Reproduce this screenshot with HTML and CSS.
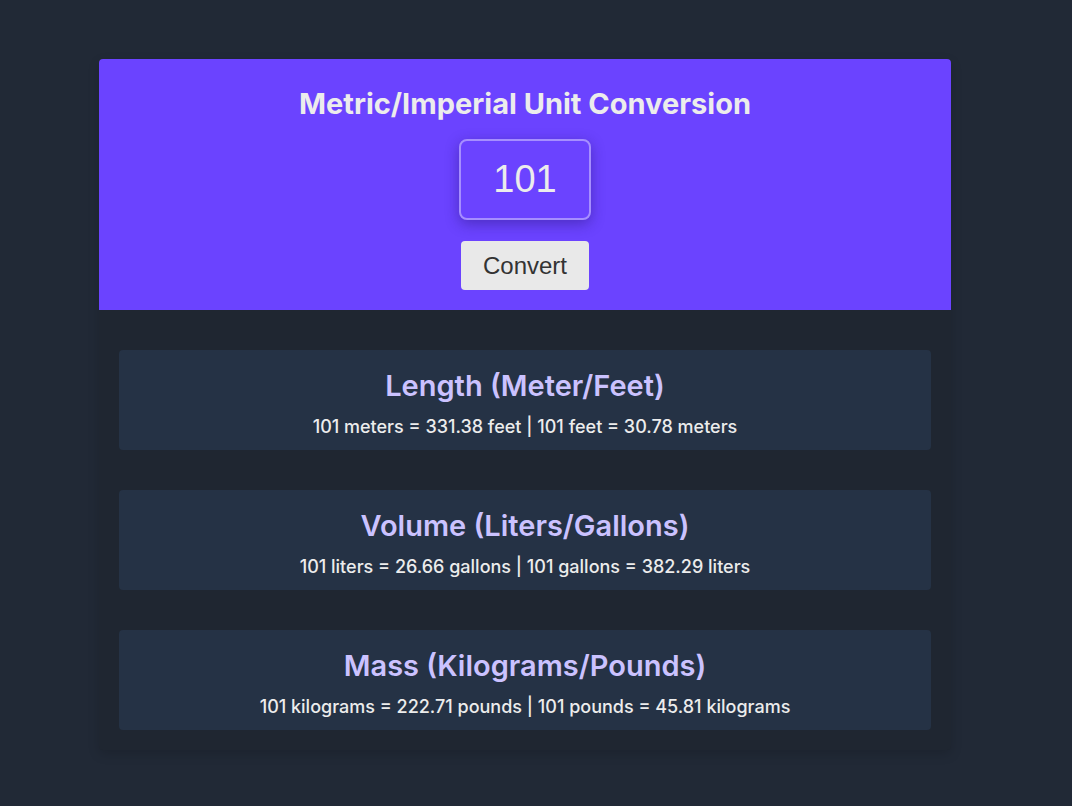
FILE: index.html
```html
<!DOCTYPE html>
<html>
<head>
<meta charset="utf-8">
<link rel="stylesheet" href="styles.css">
</head>
<body>
<div class="card">
  <header class="head">
    <h1 class="title">Metric/Imperial Unit Conversion</h1>
    <div class="input">101</div>
    <button class="btn">Convert</button>
  </header>
  <section class="results">
    <div class="box">
      <h2 class="box-title">Length (Meter/Feet)</h2>
      <p class="box-text">101 meters = 331.38 feet | 101 feet = 30.78 meters</p>
    </div>
    <div class="box">
      <h2 class="box-title">Volume (Liters/Gallons)</h2>
      <p class="box-text">101 liters = 26.66 gallons | 101 gallons = 382.29 liters</p>
    </div>
    <div class="box">
      <h2 class="box-title">Mass (Kilograms/Pounds)</h2>
      <p class="box-text">101 kilograms = 222.71 pounds | 101 pounds = 45.81 kilograms</p>
    </div>
  </section>
</div>
</body>
</html>
```

FILE: styles.css
```css
html, body {
  margin: 0;
  padding: 0;
}
body {
  background: #212936;
  font-family: Inter, "Noto Sans", sans-serif;
  padding-top: 59px;
  height: 806px;
  box-sizing: border-box;
}
.card {
  width: 852px;
  margin-left: 99px;
  background: #1f2631;
  border-radius: 4px;
  overflow: hidden;
  box-shadow: 0 4px 12px rgba(0,0,0,0.15);
}
.head {
  background: #6b43ff;
  height: 251px;
  box-sizing: border-box;
  display: flex;
  flex-direction: column;
  align-items: center;
  padding-top: 27px;
}
.title {
  margin: 0;
  color: #ececec;
  font-size: 29px;
  font-weight: 700;
  line-height: 36px;
  letter-spacing: 0;
}
.input {
  margin-top: 17px;
  width: 132px;
  height: 81px;
  box-sizing: border-box;
  border: 2px solid rgba(255,255,255,0.4);
  border-radius: 8px;
  box-shadow: 0 4px 14px rgba(40,20,120,0.45);
  display: flex;
  align-items: center;
  justify-content: center;
  color: #ececec;
  font-family: "Liberation Sans", Arial, sans-serif;
  font-size: 38px;
}
.btn {
  margin-top: 21px;
  width: 128px;
  height: 49px;
  border: none;
  border-radius: 4px;
  background: #e9e9e9;
  color: #333;
  font-family: "Liberation Sans", Arial, sans-serif;
  font-size: 24px;
  padding: 0;
}
.results {
  display: flex;
  flex-direction: column;
  gap: 40px;
  padding: 40px 20px 20px;
}
.box {
  background: #253245;
  border-radius: 4px;
  height: 100px;
  box-sizing: border-box;
  display: flex;
  flex-direction: column;
  align-items: center;
  padding-top: 18px;
}
.box-title {
  margin: 0;
  color: #cbc2ff;
  font-size: 29px;
  font-weight: 600;
  line-height: 36px;
}
.box-text {
  margin: 12px 0 0;
  color: #ececec;
  font-size: 18px;
  font-weight: 500;
  line-height: 22px;
}
```
